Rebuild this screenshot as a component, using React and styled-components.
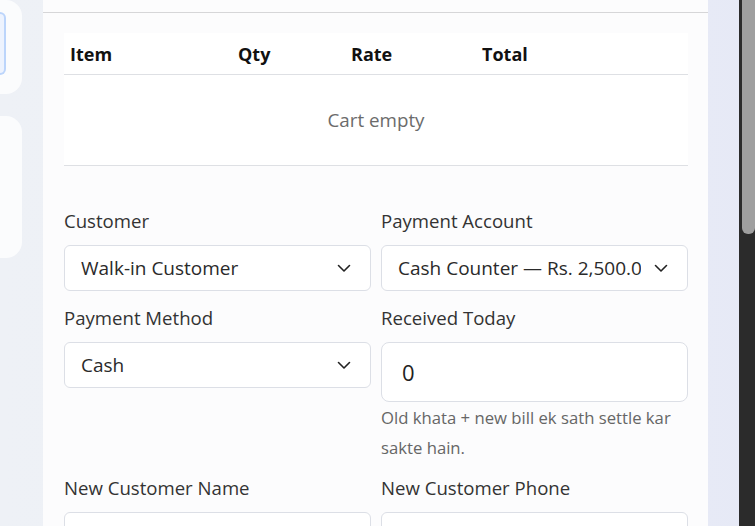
import React from 'react'
import styled, { createGlobalStyle } from 'styled-components'

const GlobalStyle = createGlobalStyle`
  html, body {
    margin: 0;
    padding: 0;
    overflow: hidden;
  }
  body {
    font-family: "Open Sans", "Noto Sans", sans-serif;
    color: #333;
  }
`

const ChevronDown = () => (
  <svg width="16" height="16" viewBox="0 0 16 16" fill="none">
    <path d="M2.5 5.5L8 11L13.5 5.5" stroke="#222" strokeWidth="1.6" strokeLinecap="round" strokeLinejoin="round" />
  </svg>
)

const Field = ({ label, children, hint }) => (
  <FieldBox>
    <Label>{label}</Label>
    {children}
    {hint && <Hint>{hint}</Hint>}
  </FieldBox>
)

const SelectBox = ({ value }) => (
  <Select>
    <SelectText>{value}</SelectText>
    <ChevronDown />
  </Select>
)

const App = () => {
  return (
    <>
      <GlobalStyle />
      <Page>
        <Sidebar>
          <SideCard $h={94}>
            <ActiveItem />
          </SideCard>
          <SideCard $h={142} />
        </Sidebar>

        <Main>
          <PanelHead>
            <DangerButton aria-label="Clear cart" />
          </PanelHead>
          <PanelBody>
            <Table>
              <HeadRow>
                <HeadCell>Item</HeadCell>
                <HeadCell>Qty</HeadCell>
                <HeadCell>Rate</HeadCell>
                <HeadCell>Total</HeadCell>
              </HeadRow>
              <EmptyRow>Cart empty</EmptyRow>
            </Table>

            <FormGrid>
              <Field label="Customer">
                <SelectBox value="Walk-in Customer" />
              </Field>
              <Field label="Payment Account">
                <SelectBox value="Cash Counter — Rs. 2,500.00" />
              </Field>
              <Field label="Payment Method">
                <SelectBox value="Cash" />
              </Field>
              <Field
                label="Received Today"
                hint="Old khata + new bill ek sath settle kar sakte hain."
              >
                <NumberInput>0</NumberInput>
              </Field>
              <Field label="New Customer Name">
                <TextInput />
              </Field>
              <Field label="New Customer Phone">
                <TextInput />
              </Field>
            </FormGrid>
          </PanelBody>
        </Main>

        <Gutter />
        <ScrollTrack>
          <ScrollThumb />
        </ScrollTrack>
      </Page>
    </>
  )
}

export default App

const Page = styled.div`
  display: flex;
  height: 526px;
  overflow: hidden;
  background: linear-gradient(90deg, #eef1f6 0%, #eceff6 60%, #e6e9f6 100%);
`

const Sidebar = styled.aside`
  width: 22px;
  flex-shrink: 0;
  display: flex;
  flex-direction: column;
  gap: 22px;
  margin-right: 21px;
`

const SideCard = styled.div`
  height: ${p => p.$h}px;
  background: #fbfcfd;
  border-radius: 0 16px 16px 0;
  padding-top: 12px;
  box-sizing: border-box;
`

const ActiveItem = styled.div`
  width: 6px;
  height: 63px;
  box-sizing: border-box;
  border: 2px solid #bcd5fb;
  border-left: none;
  border-radius: 0 8px 8px 0;
  background: #edf3fe;
`

const Main = styled.main`
  width: 665px;
  flex-shrink: 0;
  background: #fcfcfd;
  margin-top: -47px;
`

const PanelHead = styled.div`
  height: 60px;
  box-sizing: border-box;
  border-bottom: 1px solid #d6d6d8;
  display: flex;
  justify-content: flex-end;
  align-items: flex-end;
  padding: 0 21px 12px 0;
`

const DangerButton = styled.button`
  width: 59px;
  height: 34px;
  border: 1px solid #d9435a;
  border-radius: 6px;
  background: #fff;
`

const PanelBody = styled.div`
  padding: 20px 20px 0 21px;
`

const Table = styled.div`
  background: #fff;
  border-bottom: 1px solid #dee0e4;
`

const HeadRow = styled.div`
  display: grid;
  grid-template-columns: 168px 113px 131px 1fr;
  height: 41px;
  align-items: center;
  border-bottom: 1px solid #dee0e4;
`

const HeadCell = styled.div`
  padding-left: 6px;
  font-size: 18px;
  font-weight: 700;
  color: #111;
`

const EmptyRow = styled.div`
  height: 90px;
  display: flex;
  align-items: center;
  justify-content: center;
  font-size: 18.8px;
  color: #6b6b6b;
`

const FormGrid = styled.div`
  display: grid;
  grid-template-columns: repeat(2, minmax(0, 1fr));
  column-gap: 10px;
  row-gap: 13px;
  padding-top: 41px;
`

const FieldBox = styled.div`
  display: flex;
  flex-direction: column;
  min-width: 0;
`

const Label = styled.label`
  font-size: 18.6px;
  line-height: 27px;
  color: #333;
  margin-bottom: 11px;
`

const Select = styled.div`
  height: 46px;
  box-sizing: border-box;
  border: 1px solid #dcdfe6;
  border-radius: 6px;
  background: #fff;
  display: flex;
  align-items: center;
  padding: 0 18px 0 16px;
  gap: 12px;
`

const SelectText = styled.span`
  flex: 1;
  min-width: 0;
  overflow: hidden;
  white-space: nowrap;
  font-size: 19px;
  color: #2a2a2a;
`

const NumberInput = styled.div`
  height: 60px;
  box-sizing: border-box;
  border: 1px solid #dcdfe6;
  border-radius: 8px;
  background: #fff;
  display: flex;
  align-items: center;
  padding: 0 20px;
  font-size: 22px;
  color: #222;
`

const TextInput = styled.div`
  height: 46px;
  box-sizing: border-box;
  border: 1px solid #dcdfe6;
  border-radius: 6px;
  background: #fff;
`

const Hint = styled.div`
  margin: 1px 0 -2px;
  font-size: 16.7px;
  line-height: 30px;
  color: #666;
`

const Gutter = styled.div`
  flex: 1;
`

const ScrollTrack = styled.div`
  width: 16px;
  flex-shrink: 0;
  background: #2b2b2b;
  padding-left: 3px;
  box-sizing: border-box;
`

const ScrollThumb = styled.div`
  height: 234px;
  background: #9f9f9f;
  border-radius: 0 0 6px 6px;
`
